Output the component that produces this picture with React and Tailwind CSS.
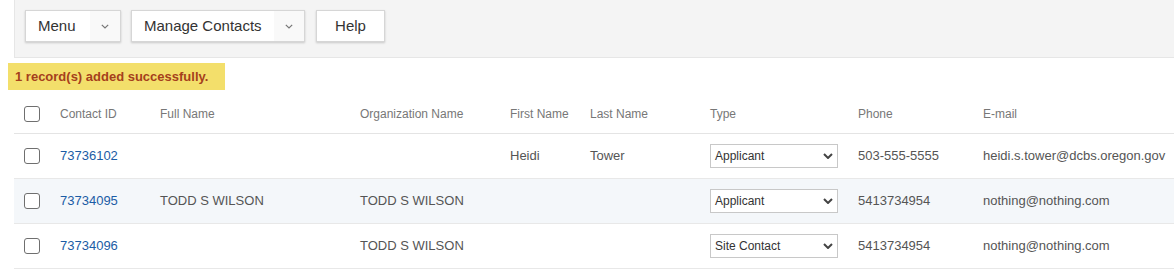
const rows = [
  { id: '73736102', full: '', org: '', first: 'Heidi', last: 'Tower', type: 'Applicant', phone: '503-555-5555', email: 'heidi.s.tower@dcbs.oregon.gov' },
  { id: '73734095', full: 'TODD S WILSON', org: 'TODD S WILSON', first: '', last: '', type: 'Applicant', phone: '5413734954', email: 'nothing@nothing.com' },
  { id: '73734096', full: '', org: 'TODD S WILSON', first: '', last: '', type: 'Site Contact', phone: '5413734954', email: 'nothing@nothing.com' },
];

const SmallChevron = () => (
  <svg width="8" height="5" viewBox="0 0 8 5" fill="none">
    <path d="M0.8 0.8 L4 4 L7.2 0.8" stroke="#777" strokeWidth="1.2" />
  </svg>
);

const BoldChevron = () => (
  <svg width="10" height="6" viewBox="0 0 10 6" fill="none">
    <path d="M1 1 L5 5 L9 1" stroke="#444" strokeWidth="2" />
  </svg>
);

const DropButton = ({ label, w }) => (
  <div className={`flex h-[32px] ${w} items-stretch border border-[#d6d6d6] bg-white shadow-[0_1px_2px_rgba(0,0,0,0.18)]`}>
    <span className="flex flex-1 items-center pl-[12px] text-[15px] text-[#333]">{label}</span>
    <span className="flex w-[30px] items-center justify-center bg-[#f9f9f9]">
      <SmallChevron />
    </span>
  </div>
);

const Checkbox = () => (
  <div className="h-[16px] w-[16px] rounded-[3px] border border-[#6f6f6f] bg-white" />
);

const TypeSelect = ({ value }) => (
  <div className="flex h-[24px] w-[128px] items-center justify-between border border-[#c8c8c8] bg-white pl-[4px] pr-[4px] text-[12px] text-[#333]">
    <span>{value}</span>
    <BoldChevron />
  </div>
);

const Cell = ({ w, children, className = '' }) => (
  <div className={`${w} shrink-0 ${className}`}>{children}</div>
);

export default function App() {
  return (
    <div className="min-h-[270px] bg-white font-['Liberation_Sans',Arial,sans-serif]">
      {/* Toolbar */}
      <div className="ml-[14px] flex h-[58px] items-start gap-[10px] border-b border-l border-[#e6e6e6] bg-[#f4f4f4] pl-[10px] pt-[10px]">
        <DropButton label="Menu" w="w-[96px]" />
        <DropButton label="Manage Contacts" w="w-[174px]" />
        <div className="ml-[1px] flex h-[32px] w-[69px] items-center justify-center border border-[#d6d6d6] bg-white text-[15px] text-[#333] shadow-[0_1px_2px_rgba(0,0,0,0.18)]">
          Help
        </div>
      </div>

      {/* Status message */}
      <div className="ml-[8px] mt-[5px] flex h-[27px] w-[217px] items-center bg-[#f3df6b] pl-[7px] text-[13px] font-bold text-[#a5401c]">
        1 record(s) added successfully.
      </div>

      {/* Table */}
      <div className="ml-[14px] mt-[4px]">
        <div className="flex h-[40px] items-center border-b border-[#e4e4e4] text-[12px] text-[#777]">
          <Cell w="w-[46px]" className="pl-[10px]"><Checkbox /></Cell>
          <Cell w="w-[100px]">Contact ID</Cell>
          <Cell w="w-[200px]">Full Name</Cell>
          <Cell w="w-[150px]">Organization Name</Cell>
          <Cell w="w-[80px]">First Name</Cell>
          <Cell w="w-[120px]">Last Name</Cell>
          <Cell w="w-[148px]">Type</Cell>
          <Cell w="w-[125px]">Phone</Cell>
          <Cell w="w-[190px]">E-mail</Cell>
        </div>
        {rows.map((r, i) => (
          <div
            key={r.id}
            className={`flex h-[45px] items-center border-b border-[#e8e8e8] text-[13px] text-[#555] ${i === 1 ? 'bg-[#f4f7fa]' : 'bg-white'}`}
          >
            <Cell w="w-[46px]" className="pl-[10px]"><Checkbox /></Cell>
            <Cell w="w-[100px]" className="text-[#1b5ca5]">{r.id}</Cell>
            <Cell w="w-[200px]">{r.full}</Cell>
            <Cell w="w-[150px]">{r.org}</Cell>
            <Cell w="w-[80px]">{r.first}</Cell>
            <Cell w="w-[120px]">{r.last}</Cell>
            <Cell w="w-[148px]"><TypeSelect value={r.type} /></Cell>
            <Cell w="w-[125px]">{r.phone}</Cell>
            <Cell w="w-[190px]" className="whitespace-nowrap">{r.email}</Cell>
          </div>
        ))}
      </div>
    </div>
  );
}
